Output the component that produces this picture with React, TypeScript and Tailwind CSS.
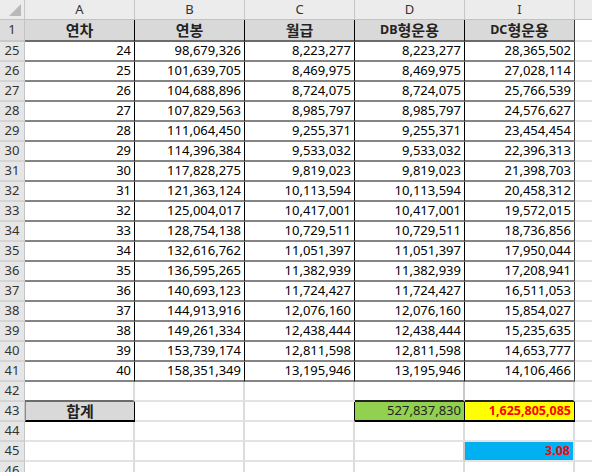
import React from "react";

const rows: [number, string, string, string, string, string][] = [
  [25, "24", "98,679,326", "8,223,277", "8,223,277", "28,365,502"],
  [26, "25", "101,639,705", "8,469,975", "8,469,975", "27,028,114"],
  [27, "26", "104,688,896", "8,724,075", "8,724,075", "25,766,539"],
  [28, "27", "107,829,563", "8,985,797", "8,985,797", "24,576,627"],
  [29, "28", "111,064,450", "9,255,371", "9,255,371", "23,454,454"],
  [30, "29", "114,396,384", "9,533,032", "9,533,032", "22,396,313"],
  [31, "30", "117,828,275", "9,819,023", "9,819,023", "21,398,703"],
  [32, "31", "121,363,124", "10,113,594", "10,113,594", "20,458,312"],
  [33, "32", "125,004,017", "10,417,001", "10,417,001", "19,572,015"],
  [34, "33", "128,754,138", "10,729,511", "10,729,511", "18,736,856"],
  [35, "34", "132,616,762", "11,051,397", "11,051,397", "17,950,044"],
  [36, "35", "136,595,265", "11,382,939", "11,382,939", "17,208,941"],
  [37, "36", "140,693,123", "11,724,427", "11,724,427", "16,511,053"],
  [38, "37", "144,913,916", "12,076,160", "12,076,160", "15,854,027"],
  [39, "38", "149,261,334", "12,438,444", "12,438,444", "15,235,635"],
  [40, "39", "153,739,174", "12,811,598", "12,811,598", "14,653,777"],
  [41, "40", "158,351,349", "13,195,946", "13,195,946", "14,106,466"],
];

const RH =
  "w-[25px] shrink-0 h-full flex items-center justify-center bg-[#e6e6e6] border-r border-r-[#c4c4c4] border-b-2 border-b-[#d4d4d4] text-[13px] text-[#333]";
const DATA =
  "w-[110px] shrink-0 h-full flex items-center justify-end pr-[3px] border-r border-r-black border-b-2 border-b-[#858585] text-[13px] text-black";
const DATA_LAST =
  "w-[110px] shrink-0 h-full flex items-center justify-end pr-[3px] border-r border-r-[#3a3a3a] border-b-2 border-b-[#858585] text-[13px] text-black";
const FILL = "flex-1 h-full border-b-2 border-b-[#e3e3e3]";
const EMPTY =
  "w-[110px] shrink-0 h-full border-r-2 border-r-[#dcdcdc] border-b-2 border-b-[#e3e3e3]";
const HEAD =
  "w-[110px] shrink-0 h-full flex items-center justify-center bg-[#d9d9d9] border-r border-r-black border-b-2 border-b-[#6b6b6b] text-[15px] font-bold text-[#222]";
const COLH =
  "w-[110px] shrink-0 h-full flex items-center justify-center bg-[#ececec] border-r border-r-[#c6c6c6] border-b border-b-[#c2c2c2] text-[13px] text-[#333]";

function EmptyRow({ n }: { n: number }) {
  return (
    <div className="flex h-[20px] shrink-0">
      <div className={RH}>{n}</div>
      <div className={EMPTY}></div>
      <div className={EMPTY}></div>
      <div className={EMPTY}></div>
      <div className={EMPTY}></div>
      <div className={EMPTY}></div>
      <div className={FILL}></div>
    </div>
  );
}

export default function App() {
  return (
    <div className="w-[592px] h-[472px] overflow-hidden bg-white flex flex-col font-['Noto_Sans','Noto_Sans_CJK_KR',sans-serif]">
      {/* column header */}
      <div className="flex h-[20px] shrink-0">
        <div className="w-[25px] shrink-0 h-full bg-[#ececec] border-r border-r-[#c6c6c6] border-b border-b-[#c2c2c2] relative">
          <svg className="absolute right-[3px] bottom-[3px]" width="12" height="12" viewBox="0 0 12 12">
            <polygon points="12,0 12,12 0,12" fill="#b9b9b9" />
          </svg>
        </div>
        <div className={COLH}>A</div>
        <div className={COLH}>B</div>
        <div className={COLH}>C</div>
        <div className={COLH}>D</div>
        <div className={COLH}>I</div>
        <div className="flex-1 h-full bg-[#ececec] border-b border-b-[#c2c2c2]"></div>
      </div>

      {/* row 1 */}
      <div className="flex h-[22px] shrink-0">
        <div className="w-[25px] shrink-0 h-full flex items-center justify-center bg-[#dcdcdc] border-r border-r-[#c4c4c4] border-b-2 border-b-[#c8c8c8] text-[13px] text-[#333]">
          1
        </div>
        <div className={HEAD}>연차</div>
        <div className={HEAD}>연봉</div>
        <div className={HEAD}>월급</div>
        <div className={HEAD}>
          <span className="text-[12.5px]">DB</span>형운용
        </div>
        <div className="w-[110px] shrink-0 h-full flex items-center justify-center bg-[#d9d9d9] border-r border-r-[#3a3a3a] border-b-2 border-b-[#6b6b6b] text-[15px] font-bold text-[#222]">
          <span className="text-[12.5px]">DC</span>형운용
        </div>
        <div className="flex-1 h-full border-b-2 border-b-[#e3e3e3]"></div>
      </div>

      {rows.map((r) => (
        <div key={r[0]} className="flex h-[20px] shrink-0">
          <div className={RH}>{r[0]}</div>
          <div className={DATA}>{r[1]}</div>
          <div className={DATA}>{r[2]}</div>
          <div className={DATA}>{r[3]}</div>
          <div className={DATA}>{r[4]}</div>
          <div className={DATA_LAST}>{r[5]}</div>
          <div className={FILL}></div>
        </div>
      ))}

      {/* row 42 */}
      <div className="flex h-[20px] shrink-0">
        <div className={RH}>42</div>
        <div className="w-[110px] shrink-0 h-full border-r-2 border-r-[#dcdcdc] border-b-2 border-b-[#6b6b6b]"></div>
        <div className={EMPTY}></div>
        <div className={EMPTY}></div>
        <div className="w-[110px] shrink-0 h-full border-r-2 border-r-[#c8c8c8] border-b-2 border-b-[#222]"></div>
        <div className="w-[110px] shrink-0 h-full border-r-2 border-r-[#dcdcdc] border-b-2 border-b-[#222]"></div>
        <div className={FILL}></div>
      </div>

      {/* row 43 */}
      <div className="flex h-[20px] shrink-0">
        <div className={RH}>43</div>
        <div className="w-[110px] shrink-0 h-full flex items-center justify-center bg-[#d9d9d9] border-l border-l-[#8a8a8a] border-r border-r-black border-b-2 border-b-black text-[15px] font-bold text-[#222]">
          합계
        </div>
        <div className={EMPTY}></div>
        <div className="w-[110px] shrink-0 h-full border-r border-r-black border-b-2 border-b-[#e3e3e3]"></div>
        <div className="w-[110px] shrink-0 h-full flex items-center justify-end pr-[3px] bg-[#92d050] border-r border-r-black border-b-2 border-b-black text-[13px] text-[#222]">
          527,837,830
        </div>
        <div className="w-[110px] shrink-0 h-full flex items-center justify-end pr-[3px] bg-[#ffff00] border-r border-r-black border-b-2 border-b-black text-[12.5px] font-bold text-[#ff0000]">
          1,625,805,085
        </div>
        <div className={FILL}></div>
      </div>

      <EmptyRow n={44} />

      {/* row 45 */}
      <div className="flex h-[20px] shrink-0">
        <div className={RH}>45</div>
        <div className={EMPTY}></div>
        <div className={EMPTY}></div>
        <div className={EMPTY}></div>
        <div className="w-[110px] shrink-0 h-full border-r-2 border-r-[#c8c8c8] border-b-2 border-b-[#e3e3e3]"></div>
        <div className="w-[110px] shrink-0 h-full flex items-center justify-end pr-[3px] bg-[#00b0f0] border-r-2 border-r-[#dcdcdc] border-b-2 border-b-[#e3e3e3] text-[12.5px] font-bold text-[#ff0000]">
          3.08
        </div>
        <div className={FILL}></div>
      </div>

      <EmptyRow n={46} />
    </div>
  );
}
